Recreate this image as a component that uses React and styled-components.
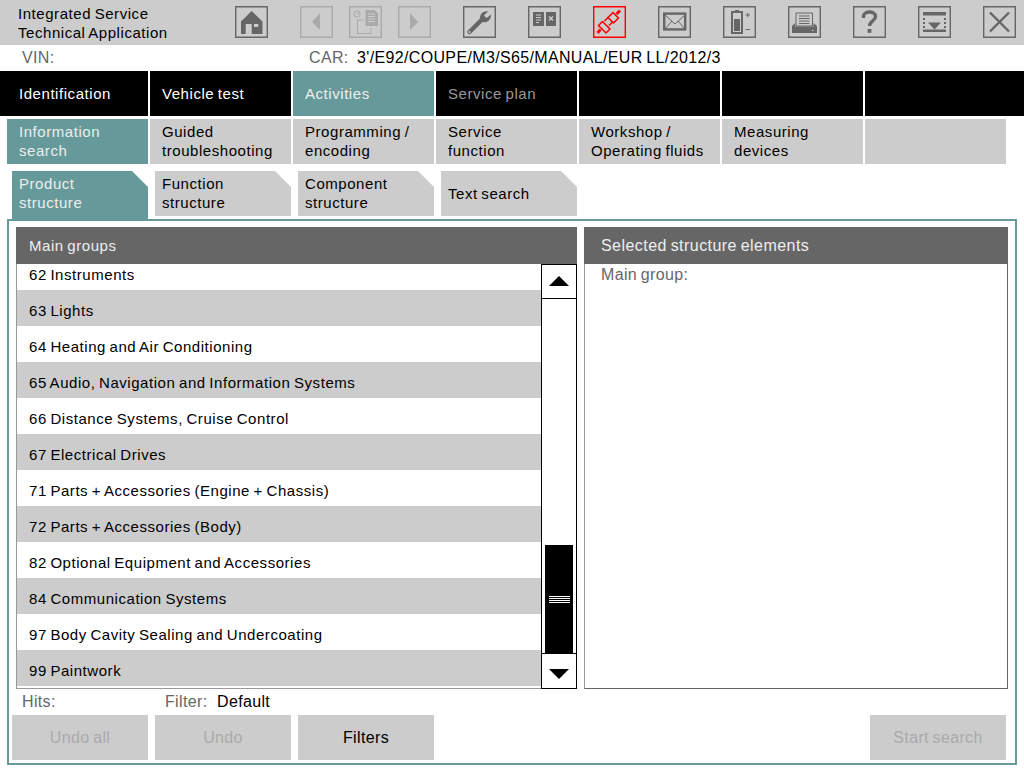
import React from "react";
import styled, { createGlobalStyle } from "styled-components";

const Global = createGlobalStyle`
  html, body { margin: 0; padding: 0; background: #fff; }
  * { box-sizing: border-box; }
  #root { width: 1024px; height: 768px; overflow: hidden; }
`;

const Page = styled.div`
  width: 1024px;
  height: 768px;
  overflow: hidden;
  background: #fff;
  font-family: "Liberation Sans", Arial, sans-serif;
  font-size: 15px;
  letter-spacing: 0.55px;
  word-spacing: -1.1px;
  color: #000;
`;

const Toolbar = styled.header`
  height: 45px;
  background: #ccc;
  display: flex;
  align-items: flex-start;
`;
const AppTitle = styled.div`
  width: 235px;
  padding: 4px 0 0 18px;
  line-height: 19px;
`;
const ToolGroup = styled.div`
  display: flex;
  margin-top: 6px;
  gap: ${(p) => p.$gap}px;
  margin-left: ${(p) => p.$left || 0}px;
`;
const ToolButton = styled.button`
  width: 33px;
  height: 32px;
  padding: 0;
  background: transparent;
  border: 1px solid ${(p) => (p.$tone === "alert" ? "#f00" : p.$tone === "off" ? "#aaa" : "#666")};
  box-shadow: inset 0 0 0 0.4px ${(p) => (p.$tone === "alert" ? "#f00" : p.$tone === "off" ? "#aaa" : "#666")};
  color: ${(p) => (p.$tone === "alert" ? "#f00" : p.$tone === "off" ? "#aaa" : "#666")};
  svg { display: block; width: 31px; height: 30px; }
`;

const Icon = ({ children }) => (
  <svg viewBox="1 1 31 30" fill="currentColor" stroke="none">{children}</svg>
);

const icons = {
  home: <path d="M16.7 5 L27.5 15.5 V28 H6 V15.5 Z M10.7 18 V28 H16.7 V18 Z M19 18 V21 H23.3 V18 Z" fillRule="evenodd" />,
  back: <path d="M20 7 L12 16 L20 24 Z" />,
  forward: <path d="M12 7 L20 16 L12 24 Z" />,
  history: (
    <>
      <circle cx="8" cy="8" r="3.2" fill="none" stroke="currentColor" strokeWidth="1" />
      <path d="M8 6 V8 H10" fill="none" stroke="currentColor" strokeWidth="0.8" />
      <path d="M16.5 4 H25.5 L29 7.5 V20 H16.5 Z" />
      <path d="M19 8 H26 M19 10.5 H26 M19 13 H26 M19 15.5 H26" stroke="#ccc" strokeWidth="1" />
      <path d="M15 14 H8.5 V27.5 H22 V22" fill="none" stroke="currentColor" strokeWidth="1" />
    </>
  ),
  wrench: (
    <>
      <path d="M6.5 26 L19.5 13" stroke="currentColor" strokeWidth="4.5" strokeLinecap="round" />
      <path d="M17 14 C16 9 20 4.5 25 5.5 L21 9.5 L23.5 12 L28 8.5 C28.5 13.5 24 17.5 19.5 16 Z" />
      <circle cx="6.5" cy="26" r="1" fill="#ccc" />
    </>
  ),
  book: (
    <>
      <rect x="5" y="6" width="11" height="14" />
      <rect x="18" y="6" width="10" height="14" />
      <path d="M8 9 H13 M8 11.5 H13 M8 14 H13 M8 16.5 H11" stroke="#ccc" strokeWidth="1" />
      <path d="M21 10.5 L25 14.5 M25 10.5 L21 14.5" stroke="#ccc" strokeWidth="1.4" />
    </>
  ),
  plug: (
    <g fill="none" stroke="currentColor" strokeWidth="1.6" strokeLinejoin="round">
      <path d="M15 11.5 L20 6.5 L25.5 12 L20.5 17 Z" />
      <path d="M23.5 8 L27 4.5" strokeWidth="2.8" />
      <path d="M5.5 19.5 L9.5 15.5 L17 23 L13 27 Z" />
      <path d="M7.5 23.5 L4.5 27" strokeWidth="2.8" />
      <path d="M11.5 15 L15.5 11 M16 19.5 L20 15.5" strokeWidth="1.6" />
    </g>
  ),
  mail: (
    <>
      <rect x="6.2" y="7.6" width="21" height="15.8" fill="none" stroke="currentColor" strokeWidth="2.4" />
      <path d="M7 9 L17 18 L27 9 M7 23 L14 15 M27 23 L20 15" fill="none" stroke="currentColor" strokeWidth="1" />
    </>
  ),
  battery: (
    <>
      <rect x="12" y="4" width="4" height="2" />
      <rect x="9" y="6" width="10" height="21" fill="none" stroke="currentColor" strokeWidth="2" />
      <rect x="11" y="13" width="6" height="12" />
      <path d="M22.5 9 H27 M24.7 6.8 V11.2 M22.5 23.5 H27" stroke="currentColor" strokeWidth="1" />
    </>
  ),
  print: (
    <>
      <path d="M8 7 H24.5 V20 H8 Z" fill="none" stroke="currentColor" strokeWidth="1" />
      <path d="M11 10 H21.5 M11 12.5 H21.5 M11 15 H21.5 M11 17.5 H21.5" stroke="currentColor" strokeWidth="1" />
      <path d="M4 20 L7 17 V20.5 H25.5 V17 L29 20 V27 H4 Z" />
      <rect x="24" y="24" width="1.5" height="1" fill="#ccc" />
    </>
  ),
  help: (
    <>
      <path d="M10.5 12 V10.5 C10.5 4.5 22.5 4.5 22.5 10.5 C22.5 15 16.5 15 16.5 20" fill="none" stroke="currentColor" strokeWidth="3.4" />
      <rect x="14.6" y="23" width="3.8" height="3.8" />
    </>
  ),
  panel: (
    <>
      <rect x="5" y="6" width="23" height="3.5" />
      <path d="M6 12 V22 M27 12 V22" stroke="currentColor" strokeWidth="2" strokeDasharray="2 2" fill="none" />
      <path d="M10 16.5 H23 L16.5 23.5 Z" />
      <rect x="5" y="23.5" width="23" height="2.5" />
    </>
  ),
  close: <path d="M7 6.5 L26 25.5 M26 6.5 L7 25.5" fill="none" stroke="currentColor" strokeWidth="2.4" />,
};

const Tool = ({ name, tone }) => (
  <ToolButton $tone={tone} aria-label={name}>
    <Icon>{icons[name]}</Icon>
  </ToolButton>
);

const InfoBar = styled.div`
  height: 26px;
  display: flex;
  align-items: center;
  line-height: 26px;
  font-size: 16px;
  letter-spacing: 0.35px;
`;
const FieldLabel = styled.span`
  color: #666;
  width: ${(p) => p.$width}px;
  margin-left: ${(p) => p.$left || 0}px;
`;
const FieldValue = styled.span`
  color: #000;
`;

const NavRow = styled.nav`
  display: grid;
  grid-template-columns: ${(p) => p.$cols};
  column-gap: 2px;
  height: 45px;
  margin-top: ${(p) => p.$top || 0}px;
  padding-left: ${(p) => p.$left || 0}px;
`;
const TopTab = styled.div`
  background: ${(p) => (p.$active ? "#669999" : "#000")};
  color: ${(p) => (p.$dim ? "#999" : p.$active ? "#eee" : "#fff")};
  padding-left: ${(p) => p.$pad}px;
  line-height: 45px;
`;
const SubTab = styled.div`
  background: ${(p) => (p.$active ? "#669999" : "#ccc")};
  color: ${(p) => (p.$active ? "#eee" : "#000")};
  padding: 3px 0 0 ${(p) => p.$pad}px;
  line-height: 19px;
`;

const FolderRow = styled.div`
  display: grid;
  grid-template-columns: repeat(4, 136px);
  grid-template-rows: 45px;
  column-gap: 7px;
  margin-top: 7px;
  padding-left: 12px;
`;
const Folder = styled.div`
  height: ${(p) => (p.$active ? 49 : 45)}px;
  background: ${(p) => (p.$active ? "#669999" : "#ccc")};
  color: ${(p) => (p.$active ? "#eee" : "#000")};
  clip-path: polygon(0 0, 120px 0, 136px 16px, 136px 100%, 0 100%);
  padding-left: 7px;
  line-height: 19px;
  display: flex;
  flex-direction: column;
  justify-content: ${(p) => (p.$single ? "center" : "flex-start")};
  padding-top: ${(p) => (p.$single ? 0 : 3)}px;
`;

const Frame = styled.main`
  width: 1010px;
  height: 546px;
  margin: 3px 0 0 7px;
  border: 2px solid #669999;
  padding: 6px 9px 3px 7px;
  background: #fff;
`;
const Columns = styled.div`
  display: grid;
  grid-template-columns: 561px 424px;
  column-gap: 7px;
  height: 462px;
`;
const Panel = styled.section`
  display: flex;
  flex-direction: column;
  min-height: 0;
  border-left: 1px solid #999;
  border-right: ${(p) => (p.$closed ? "1px solid #666" : "none")};
  border-bottom: 1px solid ${(p) => (p.$closed ? "#666" : "#999")};
  height: 462px;
`;
const PanelHead = styled.h2`
  margin: 0 0 0 -1px;
  width: ${(p) => p.$width}px;
  height: 37px;
  flex: none;
  background: #666;
  color: #eee;
  font: inherit;
  font-size: ${(p) => p.$size}px;
  letter-spacing: ${(p) => p.$track}px;
  line-height: 38px;
  padding-left: ${(p) => p.$pad}px;
`;
const ListBody = styled.div`
  flex: 1;
  display: flex;
  min-height: 0;
`;
const List = styled.div`
  flex: 1;
  overflow: hidden;
`;
const ListInner = styled.div`
  margin-top: -10px;
`;
const Row = styled.div`
  height: 36px;
  line-height: 42px;
  padding-left: 12px;
  background: ${(p) => (p.$shade ? "#ccc" : "#fff")};
  color: #000;
`;
const Scrollbar = styled.div`
  width: 36px;
  height: 425px;
  flex: none;
  border: 1px solid #000;
  display: flex;
  flex-direction: column;
  background: #fff;
`;
const ScrollButton = styled.div`
  height: ${(p) => p.$h}px;
  flex: none;
  display: flex;
  align-items: center;
  justify-content: center;
  padding: ${(p) => p.$inset};
  border-${(p) => p.$edge}: 1px solid #000;
  svg { display: block; }
`;
const Track = styled.div`
  flex: 1;
  display: flex;
  flex-direction: column;
  justify-content: flex-end;
  padding: 0 3px;
`;
const Thumb = styled.div`
  height: 108px;
  background: #000;
  display: flex;
  flex-direction: column;
  align-items: center;
  justify-content: center;
  gap: 1px;
`;
const Grip = styled.span`
  width: 21px;
  height: 1px;
  background: #fff;
`;
const DetailLabel = styled.div`
  color: #666;
  font-size: 16px;
  letter-spacing: 0.35px;
  padding: 3px 0 0 16px;
  line-height: 16px;
`;

const ActionRow = styled.div`
  height: 45px;
  display: grid;
  grid-template-columns: repeat(3, 136px) 1fr 136px;
  column-gap: 7px;
  margin-left: -4px;
  font-size: 16px;
  letter-spacing: 0.35px;
`;
const Action = styled.button`
  border: 0;
  padding: 1px 0 0;
  margin: 0;
  font: inherit;
  letter-spacing: inherit;
  word-spacing: inherit;
  background: #ccc;
  color: ${(p) => (p.disabled ? "#aaa" : "#000")};
`;
const Spacer = styled.div``;

const groups = [
  "62 Instruments",
  "63 Lights",
  "64 Heating and Air Conditioning",
  "65 Audio, Navigation and Information Systems",
  "66 Distance Systems, Cruise Control",
  "67 Electrical Drives",
  "71 Parts + Accessories (Engine + Chassis)",
  "72 Parts + Accessories (Body)",
  "82 Optional Equipment and Accessories",
  "84 Communication Systems",
  "97 Body Cavity Sealing and Undercoating",
  "99 Paintwork",
];

const lines = (t) => t.split("\n").map((l) => <div key={l}>{l}</div>);

export default function App() {
  return (
    <Page>
      <Global />
      <Toolbar>
        <AppTitle>
          <div>Integrated Service</div>
          <div>Technical Application</div>
        </AppTitle>
        <ToolGroup $gap={0}><Tool name="home" /></ToolGroup>
        <ToolGroup $gap={16} $left={32}>
          <Tool name="back" tone="off" />
          <Tool name="history" tone="off" />
          <Tool name="forward" tone="off" />
        </ToolGroup>
        <ToolGroup $gap={32} $left={32}>
          <Tool name="wrench" />
          <Tool name="book" />
          <Tool name="plug" tone="alert" />
          <Tool name="mail" />
          <Tool name="battery" />
          <Tool name="print" />
          <Tool name="help" />
          <Tool name="panel" />
          <Tool name="close" />
        </ToolGroup>
      </Toolbar>
      <InfoBar>
        <FieldLabel $left={22} $width={287}>VIN:</FieldLabel>
        <FieldLabel $width={48}>CAR:</FieldLabel>
        <FieldValue>3'/E92/COUPE/M3/S65/MANUAL/EUR LL/2012/3</FieldValue>
      </InfoBar>
      <NavRow $cols="148px repeat(5, 141px) 159px">
        <TopTab $pad={19}>Identification</TopTab>
        <TopTab $pad={12}>Vehicle test</TopTab>
        <TopTab $pad={12} $active>Activities</TopTab>
        <TopTab $pad={12} $dim>Service plan</TopTab>
        <TopTab />
        <TopTab />
        <TopTab />
      </NavRow>
      <NavRow $cols="141px repeat(6, 141px)" $top={3} $left={7}>
        <SubTab $pad={12} $active>{lines("Information\nsearch")}</SubTab>
        <SubTab $pad={12}>{lines("Guided\ntroubleshooting")}</SubTab>
        <SubTab $pad={12}>{lines("Programming /\nencoding")}</SubTab>
        <SubTab $pad={12}>{lines("Service\nfunction")}</SubTab>
        <SubTab $pad={12}>{lines("Workshop /\nOperating fluids")}</SubTab>
        <SubTab $pad={12}>{lines("Measuring\ndevices")}</SubTab>
        <SubTab />
      </NavRow>
      <FolderRow>
        <Folder $active>{lines("Product\nstructure")}</Folder>
        <Folder>{lines("Function\nstructure")}</Folder>
        <Folder>{lines("Component\nstructure")}</Folder>
        <Folder $single>Text search</Folder>
      </FolderRow>
      <Frame>
        <Columns>
          <Panel>
            <PanelHead $width={561} $pad={13} $size={15} $track={0.55}>Main groups</PanelHead>
            <ListBody>
              <List>
                <ListInner>
                  {groups.map((g, i) => (
                    <Row key={g} $shade={i % 2 === 1}>{g}</Row>
                  ))}
                </ListInner>
              </List>
              <Scrollbar>
                <ScrollButton $h={34} $edge="bottom" $inset="0 0 2px">
                  <svg width="20" height="10" viewBox="0 0 20 10"><path d="M10 0 L20 10 H0 Z" /></svg>
                </ScrollButton>
                <Track>
                  <Thumb><Grip /><Grip /><Grip /><Grip /></Thumb>
                </Track>
                <ScrollButton $h={35} $edge="top" $inset="5px 0 0">
                  <svg width="20" height="10" viewBox="0 0 20 10"><path d="M0 0 H20 L10 10 Z" /></svg>
                </ScrollButton>
              </Scrollbar>
            </ListBody>
          </Panel>
          <Panel $closed>
            <PanelHead $width={424} $pad={17} $size={16} $track={0.45}>Selected structure elements</PanelHead>
            <DetailLabel>Main group:</DetailLabel>
          </Panel>
        </Columns>
        <InfoBar>
          <FieldLabel $left={6} $width={143}>Hits:</FieldLabel>
          <FieldLabel $width={52}>Filter:</FieldLabel>
          <FieldValue>Default</FieldValue>
        </InfoBar>
        <ActionRow>
          <Action disabled>Undo all</Action>
          <Action disabled>Undo</Action>
          <Action>Filters</Action>
          <Spacer />
          <Action disabled>Start search</Action>
        </ActionRow>
      </Frame>
    </Page>
  );
}
